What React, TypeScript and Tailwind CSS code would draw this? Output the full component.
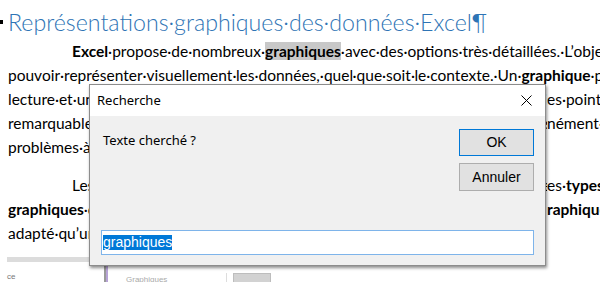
import React from "react";

const B = ({ children }: { children: React.ReactNode }) => <b className="font-bold">{children}</b>;

function Line({ left, right, indent }: { left: React.ReactNode; right?: React.ReactNode; indent?: boolean }) {
  return (
    <div className="flex h-[24px] leading-[24px] whitespace-nowrap">
      <div className={"w-[539px] shrink-0 overflow-hidden " + (indent ? "pl-[64px]" : "")}>{left}</div>
      {right ? <div className="shrink-0">{right}</div> : null}
    </div>
  );
}

export default function App() {
  return (
    <div className="relative w-[600px] h-[282px] overflow-hidden bg-white">
      {/* Word document background */}
      <div className="flex flex-col text-black font-['Lato',sans-serif] text-[15.5px]">
        <div className="flex items-center h-[30px] mt-[7px] whitespace-nowrap">
          <div className="w-[3px] h-[4px] bg-black mr-[5px]" />
          <div className="text-[23.2px] font-light text-[#2e74b5] leading-[30px]">
            Représentations·graphiques·des·données·Excel¶
          </div>
        </div>
        <div className="mt-[2px] pl-[8px] flex flex-col">
          <div className="h-[24px] leading-[24px] whitespace-nowrap pl-[64px]">
            <B>Excel</B>·propose·de·nombreux·<span className="bg-[#c8c8c8] font-bold">graphiques</span>·avec·des·options·très·détaillées.·L’objectif·est·de
          </div>
          <div className="h-[24px] leading-[24px] whitespace-nowrap">
            pouvoir·représenter·visuellement·les·données,·quel·que·soit·le·contexte.·Un·<B>graphique</B>·permet·une
          </div>
          <Line left="lecture·et·une·analyse·plus·rapides·des·données·qui·mettent·en·évidence·les·points" right="es·points" />
          <Line left="remarquables·et·les·tendances,·pour·anticiper·efficacement·et·simultanément·les" right="nément·" />
          <Line left="problèmes·à·venir·et·les·opportunités·à·saisir." />
        </div>
        <div className="mt-[14px] pl-[8px] flex flex-col">
          <Line indent left="Les·exemples·qui·suivent·présentent·quelques-uns·des·principaux·types" right={<span>es·<B>types</B></span>} />
          <Line left={<span><B>graphiques</B>·c</span>} right={<B>raphiques</B>} />
          <Line left="adapté·qu’un·autre·pour·représenter·les·données." />
        </div>
        {/* background window strip */}
        <div className="mt-[12px] flex flex-col">
          <div className="ml-[7px] w-[275px] h-[5px] bg-[#dcdcdc]" />
          <div className="flex items-start h-[19px] mt-[3px]">
            <div className="ml-[7px] mt-[8px] w-[97px] text-[8px] leading-[8px] text-[#777] font-['Liberation_Sans',sans-serif]">ce</div>
            <div className="w-[2px] h-[19px] bg-[#999]" />
            <div className="w-[2px] h-[19px] bg-[#b7a3d6]" />
            <div className="ml-[18px] mt-[11px] w-[100px] text-[8px] leading-[8px] text-[#aaa] font-['Liberation_Sans',sans-serif]">Graphiques</div>
            <div className="w-[1px] h-[19px] mt-[8px] bg-[#ddd]" />
            <div className="ml-[6px] mt-[8px] w-[38px] h-[12px] bg-[#d2d2d2] border border-[#bdbdbd]" />
          </div>
        </div>
      </div>

      {/* Dialog overlay */}
      <div className="absolute left-[89px] top-[84px] w-[457px] h-[182px] border border-[#8c8c8c] bg-[#f0f0f0] shadow-[1px_2px_3px_rgba(0,0,0,0.45)] flex flex-col">
        <div className="h-[31px] bg-white flex items-center pl-[7px] pr-[13px] shrink-0">
          <span className="font-['Noto_Sans',sans-serif] text-[13px] text-black">Recherche</span>
          <svg className="ml-auto" width="11" height="11" viewBox="0 0 11 11">
            <path d="M0.5 0.5 L10.5 10.5 M10.5 0.5 L0.5 10.5" stroke="#000" strokeWidth="1" />
          </svg>
        </div>
        <div className="flex-1 flex flex-col">
          <div className="flex pl-[13px] pr-[11px] pt-[13px]">
            <div className="mt-[1px] font-['Noto_Sans',sans-serif] text-[13px] leading-[20px] text-black">Texte cherché ?</div>
            <div className="ml-auto flex flex-col gap-[7px]">
              <div className="w-[75px] h-[27px] bg-[#e1e1e1] border border-[#0078d7] flex items-center justify-center font-['Liberation_Sans',sans-serif] text-[14px] text-black">OK</div>
              <div className="w-[75px] h-[28px] bg-[#e1e1e1] border border-[#adadad] flex items-center justify-center font-['Liberation_Sans',sans-serif] text-[14px] text-black">Annuler</div>
            </div>
          </div>
          <div className="mt-auto mx-[11px] mb-[10px] h-[25px] bg-white border border-[#7eb4ea] flex items-center pl-[1px]">
            <span className="bg-[#0078d7] text-white font-['Liberation_Sans',sans-serif] text-[14px] leading-[15px]">graphiques</span>
          </div>
        </div>
      </div>
    </div>
  );
}
